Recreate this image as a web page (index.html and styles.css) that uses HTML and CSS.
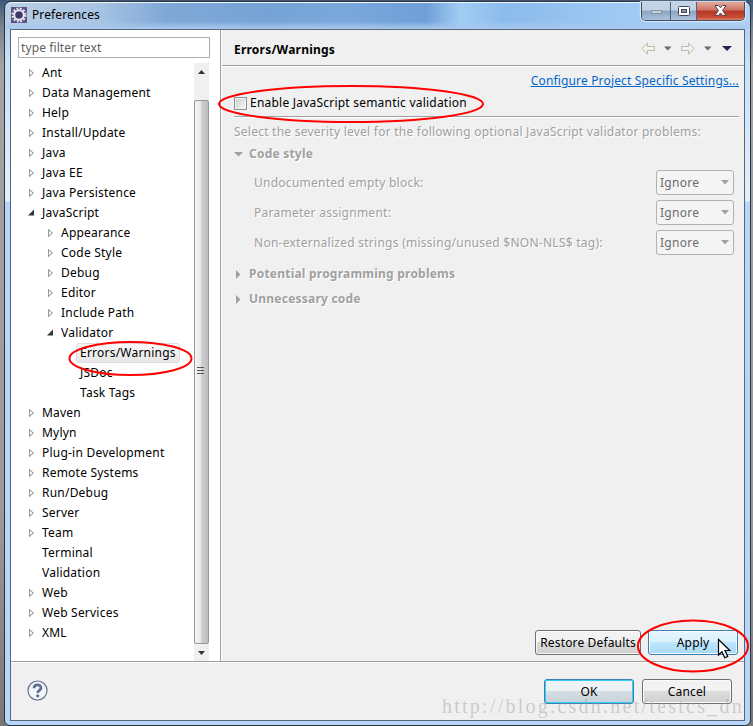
FILE: index.html
```html
<!DOCTYPE html>
<html lang="en">
<head>
<meta charset="utf-8">
<title>Preferences</title>
<link rel="stylesheet" href="styles.css">
</head>
<body>
<div class="desktop">
<div class="window">
  <header class="titlebar">
    <svg class="app-icon" width="16" height="16" viewBox="0 0 16 16"><rect width="16" height="16" fill="#5d5288"/><circle cx="8" cy="8" r="6.300" fill="none" stroke="#e4e2ea" stroke-width="2.400" stroke-dasharray="1.900 1.400"/><circle cx="8" cy="8" r="4.700" fill="#41386a" stroke="#eceaf2" stroke-width="1.800"/></svg>
    <span class="title">Preferences</span>
    <div class="controls">
      <span class="ctl min"><svg width="11" height="5"><rect x=".5" y=".5" width="10" height="3" fill="#c5d0de" stroke="#8995a5"/></svg></span>
      <span class="ctl max"><svg width="12" height="10"><rect x=".5" y=".5" width="11" height="9" rx="1" fill="#fff" stroke="#40485a"/><rect x="3.500" y="3.500" width="5" height="3" fill="#8999b0" stroke="#40485a"/></svg></span>
      <span class="ctl close"><svg width="13" height="11" viewBox="0 0 13 11"><path d="M1 .5h3.500l2 2.300 2-2.300H12L8.600 5.400l3.400 5H8.500l-2-2.400-2 2.400H1l3.400-5z" fill="#fff" stroke="#4d4050"/></svg></span>
    </div>
  </header>
  <div class="client">
    <div class="upper">
      <aside class="sidebar">
        <div class="filter">type filter text</div>
        <div class="tree-wrap">
          <ul class="tree">
            <li class="shut">Ant</li><li class="shut">Data Management</li><li class="shut">Help</li><li class="shut">Install/Update</li><li class="shut">Java</li><li class="shut">Java EE</li><li class="shut">Java Persistence</li><li class="open">JavaScript</li>
            <li class="shut l2">Appearance</li><li class="shut l2">Code Style</li><li class="shut l2">Debug</li><li class="shut l2">Editor</li><li class="shut l2">Include Path</li><li class="open l2">Validator</li>
            <li class="l3"><span class="selected">Errors/Warnings</span></li><li class="l3">JSDoc</li><li class="l3">Task Tags</li>
            <li class="shut">Maven</li><li class="shut">Mylyn</li><li class="shut">Plug-in Development</li><li class="shut">Remote Systems</li><li class="shut">Run/Debug</li><li class="shut">Server</li><li class="shut">Team</li><li>Terminal</li><li>Validation</li><li class="shut">Web</li><li class="shut">Web Services</li><li class="shut">XML</li>
          </ul>
          <div class="scrollbar">
            <div class="sb-btn"><svg width="7" height="4"><path d="M0 4L3.500 0 7 4z" fill="#333"/></svg></div>
            <div class="thumb"><i></i><i></i><i></i></div>
            <div class="sb-btn"><svg width="7" height="4"><path d="M0 0h7L3.500 4z" fill="#333"/></svg></div>
          </div>
        </div>
      </aside>
      <main class="page">
        <div class="page-head">
          <h1>Errors/Warnings</h1>
          <div class="nav">
            <svg width="92" height="13" viewBox="0 0 92 13"><g fill="#f3f3ea" stroke="#b9bab0"><path d="M.7 6.500L6.500 1v3.500h7v4h-7V12z"/><path d="M53.300 6.500L47.500 1v3.500h-7v4h7V12z"/></g><path d="M23 4.500h7.500L26.700 8.500zM63 4.500h7.500L66.700 8.500z" fill="#6b6b6b"/><path d="M81 4h10l-5 5z" fill="#24244f"/></svg>
          </div>
        </div>
        <div class="page-body">
          <div class="link-row"><a>Configure Project Specific Settings...</a></div>
          <div class="check"><span class="box"></span><span>Enable JavaScript semantic validation</span></div>
          <div class="rule"></div>
          <p class="hint off">Select the severity level for the following optional JavaScript validator problems:</p>
          <h2 class="off"><svg width="9" height="5"><path d="M0 0h9L4.500 4.500z"/></svg><span>Code style</span></h2>
          <div class="row off first"><span>Undocumented empty block:</span><span class="combo">Ignore<svg width="8" height="5"><path d="M0 0h8L4 4.500z"/></svg></span></div>
          <div class="row off"><span>Parameter assignment:</span><span class="combo">Ignore<svg width="8" height="5"><path d="M0 0h8L4 4.500z"/></svg></span></div>
          <div class="row off"><span>Non-externalized strings (missing/unused $NON-NLS$ tag):</span><span class="combo">Ignore<svg width="8" height="5"><path d="M0 0h8L4 4.500z"/></svg></span></div>
          <h2 class="off sec"><svg width="9" height="9"><path d="M2 0l4.500 4.500L2 9z"/></svg><span>Potential programming problems</span></h2>
          <h2 class="off sec"><svg width="9" height="9"><path d="M2 0l4.500 4.500L2 9z"/></svg><span>Unnecessary code</span></h2>
          <div class="actions"><span class="btn restore">Restore Defaults</span><span class="btn apply">Apply</span></div>
        </div>
      </main>
    </div>
    <footer class="footer">
      <svg class="help" width="21" height="21" viewBox="0 0 21 21"><circle cx="10.500" cy="10.500" r="9.500" fill="#f4f6fa" stroke="#62718f" stroke-width="1.200"/><path d="M7 8.200C7 3.700 14 3.900 14 7.900c0 2.500-3.300 2.400-3.300 5" fill="none" stroke="#5d7095" stroke-width="2.700"/><circle cx="10.700" cy="15.800" r="1.600" fill="#5d7095"/></svg>
      <div class="foot-btns"><span class="btn ok">OK</span><span class="btn">Cancel</span></div>
    </footer>
  </div>
</div>
<div class="watermark">http://blog.csdn.net/testcs_dn</div>
<svg class="marks" width="753" height="726"><g fill="none" stroke="#f00" stroke-width="2"><ellipse cx="351" cy="104" rx="132" ry="18"/><ellipse cx="130.500" cy="358.500" rx="61" ry="16.500"/><ellipse cx="693" cy="646" rx="55" ry="25.500"/></g><path d="M718.500 639.500v15.500l3.500-3.300 2.700 6 3-1.300-2.700-5.900h4.800z" fill="#fff" stroke="#000" stroke-width="1.200"/></svg>
</div>
</body>
</html>
```
FILE: styles.css
```css
* { box-sizing: border-box; }
body { margin: 0; font: 12px/20px "Noto Sans", "Open Sans", sans-serif; letter-spacing: .22px; color: #000; }
.desktop { position: relative; width: 753px; height: 726px; overflow: hidden; padding: 1px 2px 0 4px; background: linear-gradient(#3e5775 0, #77818f 25px, #a3a3a3 65px, #999 520px, #777 100%); }
.window { width: 747px; height: 725px; padding: 0 6px 5px; border: 1px solid #2c333b; border-radius: 7px 7px 6px 6px; background: linear-gradient(#a8c8ed 0, #c8e0f9 60px, #e4f0fc 199px, #b5d5fa 200px, #b5d5fa 100%); }
.titlebar { display: flex; height: 27px; margin: 0 -5px; padding-left: 5px; border-top: 1px solid #eef7ff; border-radius: 6px 6px 0 0; background: linear-gradient(transparent 70%, #a9c9ef), linear-gradient(90deg, #b8d0e6 0, #a9c5e3 90px, #7fa8d6 160px, #76a3d6 260px, #7aa8dc 340px, #6f9fd8 420px, #a1cdf4 455px, #8bbbec 500px, #9cc8f3 600px, #b0d2f4 100%); }
.app-icon { margin-top: 4px; }
.title { margin: 2px 0 0 5px; letter-spacing: .1px; }
.controls { display: flex; width: 104px; height: 19px; margin: -1px 4px 0 auto; border: 1px solid #3f4d62; border-top: 0; border-radius: 0 0 5px 5px; overflow: hidden; box-shadow: 0 0 1px 1px #ddebfa; }
.ctl { display: flex; align-items: center; justify-content: center; padding-bottom: 1px; background: linear-gradient(#c3d3e6 0 45%, #8ba3c0 50%, #abc3df); border-right: 1px solid #53647c; }
.min { width: 29px; padding-top: 4px; }
.max { width: 26px; }
.close { flex: 1; border: 0; background: linear-gradient(#dfa092 0 10%, #cd7161 45%, #b63825 50%, #c74c32 85%, #dc8068); }
.client { display: flex; flex-direction: column; width: 735px; height: 692px; margin-left: -1px; border: 1px solid #566778; background: #f0f0f0; }
.upper { display: flex; height: 632px; border-bottom: 1px solid #a0a0a0; }
.sidebar { width: 210px; padding-top: 7px; background: #fff; border-right: 1px solid #a0a0a0; }
.filter { height: 21px; width: 192px; margin-left: 7px; padding-left: 2px; border: 1px solid #abadb3; line-height: 20px; color: #606060; letter-spacing: .1px; }
.tree-wrap { display: flex; justify-content: space-between; margin-top: 5px; padding-right: 11px; }
.tree { list-style: none; margin: 0; padding: 0 0 0 17px; }
.tree li { display: flex; align-items: center; height: 20px; padding-left: 14px; white-space: nowrap; }
.tree .l2 { margin-left: 19px; }
.tree .l3 { margin-left: 38px; }
.tree .shut, .tree .open { padding-left: 0; }
.shut::before, .open::before { content: ""; width: 14px; height: 9px; flex: none; background: linear-gradient(#999, #999); clip-path: polygon(evenodd, 1px 0, 6px 4.500px, 1px 9px, 1px 0, 2px 2.200px, 2px 6.800px, 4.600px 4.500px, 2px 2.200px); }
.open::before { background: #333; clip-path: polygon(6px 1px, 6px 7px, 0 7px); }
.selected { height: 20px; margin-left: -4px; padding: 0 3px; border: 1px solid #ddd; border-radius: 3px; background: linear-gradient(#f9f9f9, #e6e6e6); line-height: 18px; }
.scrollbar { display: flex; flex-direction: column; width: 15px; height: 598px; background: #f0f0f0; }
.sb-btn { display: flex; align-items: center; justify-content: center; height: 17px; }
.thumb { flex: 1; display: flex; flex-direction: column; align-items: center; justify-content: center; gap: 2px; margin-top: 20px; padding: 0 2px 3px 0; border: 1px solid #979797; border-radius: 2px; background: linear-gradient(90deg, #f5f5f5, #e8e8ea 45%, #d0d0d3 50%, #bcbcc0); }
.thumb i { width: 7px; height: 1px; background: #555; }
.page { flex: 1; display: flex; flex-direction: column; border-left: 1px solid #fff; }
.page-head { display: flex; justify-content: space-between; height: 36px; padding: 10px 11px 0 12px; border-bottom: 1px solid #a0a0a0; box-shadow: 0 1px #fff; }
h1 { margin: 0; font-size: 12px; line-height: 20px; }
.nav { padding-top: 1px; }
.page-body { flex: 1; display: flex; flex-direction: column; padding: 5px 5px 6px 12px; }
.link-row { display: flex; justify-content: flex-end; height: 20px; }
.link-row a { color: #0066cc; letter-spacing: .16px; text-decoration: underline; }
.check { display: flex; align-items: center; height: 20px; margin-top: 2px; }
.box { width: 13px; height: 13px; margin-right: 3px; border: 1px solid #8e8f8f; background: linear-gradient(135deg, #c8ccd2, #f8f8f8); box-shadow: inset 0 0 0 1px #f4f4f4; }
.rule { height: 1px; margin-top: 3px; background: #a0a0a0; box-shadow: 0 1px #fff; }
.off { color: #a0a0a0; text-shadow: 1px 1px #fff; }
.off svg { fill: #a0a0a0; }
.hint { margin: 5px 0 0; white-space: nowrap; letter-spacing: .24px; }
h2 { display: flex; align-items: center; gap: 6px; height: 20px; margin: 2px 0 0; font-size: 12px; }
.row { display: flex; align-items: center; justify-content: space-between; height: 25px; margin-top: 5px; padding: 0 5px 0 20px; white-space: nowrap; letter-spacing: .26px; }
.first { margin-top: 6px; }
.combo { display: flex; align-items: center; justify-content: space-between; width: 78px; height: 25px; padding: 0 4px 0 3px; border: 1px solid #adb2b5; border-radius: 3px; background: #f4f4f4; color: #6d6d6d; text-shadow: none; }
.sec { margin-top: 9px; }
.sec + .sec { margin-top: 5px; }
.actions { display: flex; justify-content: flex-end; gap: 7px; margin-top: auto; padding-right: 1px; }
.btn { display: block; width: 90px; height: 25px; border: 1px solid #707070; border-radius: 3px; text-align: center; line-height: 24px; letter-spacing: .15px; white-space: nowrap; background: linear-gradient(#f2f2f2 0 45%, #dddddd 50%, #cfcfcf); box-shadow: inset 0 0 0 1px #fafafa; }
.restore { width: 106px; }
.apply { border-color: #3c7fb1; background: linear-gradient(#eaf6fd 0, #d9f0fc 48%, #bee6fd 50%, #a7d9f5); }
.footer { display: flex; justify-content: space-between; flex: 1; padding: 16px 12px 0 16px; border-top: 1px solid #fff; }
.help { margin-top: 1px; }
.foot-btns { display: flex; gap: 8px; }
.ok { border-color: #3c7fb1; background: linear-gradient(#eef2f4 0 45%, #d3dde3 50%, #c9d2d8); box-shadow: inset 0 0 0 1px #35d0f7; }
.watermark { position: absolute; left: 442px; top: 695px; font: 20px/22px "Liberation Serif", serif; color: rgba(150, 150, 145, .42); white-space: nowrap; letter-spacing: 2.250px; }
.marks { position: absolute; left: 0; top: 0; }
```
